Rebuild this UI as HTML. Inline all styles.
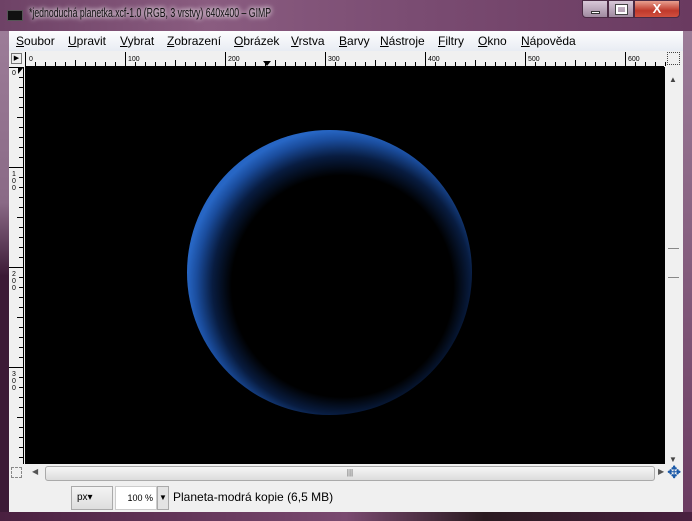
<!DOCTYPE html>
<html><head><meta charset="utf-8"><style>
*{margin:0;padding:0;box-sizing:border-box}
body{width:692px;height:521px;overflow:hidden;background:#5a2a50;font-family:"Liberation Sans","DejaVu Sans",sans-serif;position:relative}
.a{position:absolute}
</style></head><body>
<div class="a" style="left:0;top:0;width:692px;height:31px;background:linear-gradient(90deg,#6e4266 0%,#8a5c80 30%,#7a4c72 60%,#6a3a60 100%)"></div>
<div class="a" style="left:0;top:31px;width:9px;height:490px;background:linear-gradient(180deg,#9c7c98 0%,#8a6a86 35%,#3c1a36 50%,#3c1a36 100%)"></div>
<div class="a" style="left:683px;top:31px;width:9px;height:490px;background:linear-gradient(180deg,#9c7c98,#6a3a60)"></div>
<div class="a" style="left:0;top:512px;width:692px;height:9px;background:linear-gradient(90deg,#4a2040,#7a4a70 50%,#2a1a20 70%,#4a2040)"></div>
<div class="a" style="left:7px;top:10px;width:16px;height:11px;background:#111;border:1px solid #555"></div>
<div class="a" style="left:29px;top:5px;font-size:13px;color:#111;white-space:nowrap;transform:scaleX(0.67);transform-origin:0 0;text-shadow:0 0 8px #fff,0 0 6px #fff">*jednoduchá planetka.xcf-1.0 (RGB, 3 vrstvy) 640x400 – GIMP</div>
<div class="a" style="left:582px;top:0;width:26px;height:18px;border:1px solid #4a2a44;border-radius:0 0 0 4px;background:linear-gradient(#d8c8d8,#a08aa0)"><div class="a" style="left:8px;top:10px;width:9px;height:3px;background:#fff;border:1px solid #333"></div></div>
<div class="a" style="left:608px;top:0;width:26px;height:18px;border:1px solid #4a2a44;background:linear-gradient(#d8c8d8,#a08aa0)"><div class="a" style="left:7px;top:4px;width:11px;height:9px;border:2px solid #fff;outline:1px solid #444"></div></div>
<div class="a" style="left:634px;top:0;width:46px;height:18px;border:1px solid #4a2a44;border-radius:0 0 4px 0;background:linear-gradient(#e8a090,#c0392b 60%,#d05040);color:#fff;font-weight:bold;font-size:13px;text-align:center;line-height:16px">X</div>
<div class="a" style="left:9px;top:31px;width:674px;height:481px;background:#f0f0f0"></div>
<div class="a" style="left:9px;top:31px;width:674px;height:20px;background:linear-gradient(#fdfdfe,#e8ecf3);font-size:12px;color:#000;white-space:nowrap;line-height:20px">
<span class="a" style="left:7px"><u>S</u>oubor</span><span class="a" style="left:59px"><u>U</u>pravit</span><span class="a" style="left:111px"><u>V</u>ybrat</span><span class="a" style="left:158px"><u>Z</u>obrazení</span><span class="a" style="left:225px"><u>O</u>brázek</span><span class="a" style="left:282px"><u>V</u>rstva</span><span class="a" style="left:330px"><u>B</u>arvy</span><span class="a" style="left:371px"><u>N</u>ástroje</span><span class="a" style="left:429px"><u>F</u>iltry</span><span class="a" style="left:469px"><u>O</u>kno</span><span class="a" style="left:512px"><u>N</u>ápověda</span></div>
<div class="a" style="left:11px;top:53px;width:11px;height:11px;border:1px solid #777;background:#eee;font-size:7px;line-height:9px;text-align:center">▶</div>
<svg class="a" style="left:0;top:0" width="692" height="521">
<g stroke="#000" stroke-width="1" shape-rendering="crispEdges">
<line x1="25" y1="66.5" x2="664" y2="66.5"/>
<line x1="23.5" y1="67" x2="23.5" y2="464"/>
</g>
<g id="ht" stroke="#000" shape-rendering="crispEdges"></g>
<g font-size="7" font-family="Liberation Sans" fill="#000">
<text x="29" y="61">0</text><text x="128" y="61">100</text><text x="228" y="61">200</text><text x="328" y="61">300</text><text x="428" y="61">400</text><text x="528" y="61">500</text><text x="628" y="61">600</text>
<text x="12" y="75">0</text>
<text x="12" y="176">1</text><text x="12" y="183">0</text><text x="12" y="190">0</text>
<text x="12" y="276">2</text><text x="12" y="283">0</text><text x="12" y="290">0</text>
<text x="12" y="376">3</text><text x="12" y="383">0</text><text x="12" y="390">0</text>
</g>
<polygon points="263,61 271,61 267,66" fill="#000"/>
<polygon points="18,68 23,68 18,74" fill="#000"/>
</svg>
<div class="a" style="left:25px;top:67px;width:640px;height:397px;background:#000"></div>
<svg class="a" style="left:0;top:0" width="692" height="521">
<defs><radialGradient id="g" cx="0.54" cy="0.54" r="0.54" fx="0.56" fy="0.57">
<stop offset="0" stop-color="#000"/><stop offset="0.72" stop-color="#000"/><stop offset="0.84" stop-color="#081c40"/><stop offset="0.94" stop-color="#1a4c9c"/><stop offset="1" stop-color="#2766c4"/></radialGradient></defs>
<circle cx="329.5" cy="272.5" r="142.5" fill="url(#g)"/>
</svg>
<div class="a" style="left:666px;top:67px;width:17px;height:397px;background:#f0f0f0"></div>
<div class="a" style="left:669px;top:75px;font-size:8px;color:#444">▲</div>
<div class="a" style="left:668px;top:248px;width:11px;height:30px;border-top:1px solid #888;border-bottom:1px solid #888"></div>
<div class="a" style="left:669px;top:455px;font-size:8px;color:#444">▼</div>
<div class="a" style="left:667px;top:52px;width:13px;height:13px;border:1px dotted #444"></div>
<div class="a" style="left:11px;top:467px;width:11px;height:11px;border:1px dashed #888"></div>
<div class="a" style="left:32px;top:467px;font-size:8px;color:#555">◀</div>
<div class="a" style="left:45px;top:466px;width:610px;height:15px;border:1px solid #aaa;border-radius:3px;background:linear-gradient(#f6f6f6,#dcdcdc);text-align:center;font-size:8px;line-height:12px;color:#555">|||</div>
<div class="a" style="left:658px;top:467px;font-size:8px;color:#555">▶</div>
<div class="a" style="left:667px;top:464px;font-size:17px;color:#1c5aa8;line-height:17px">✥</div>
<div class="a" style="left:71px;top:486px;width:42px;height:24px;border:1px solid #aaa;background:linear-gradient(#f4f4f4,#dedede);font-size:10px;line-height:22px;padding-left:5px">px▾</div>
<div class="a" style="left:115px;top:486px;width:42px;height:24px;background:#fff;border:1px solid #ccc;font-size:9px;line-height:22px;text-align:right;padding-right:3px">100 %</div>
<div class="a" style="left:157px;top:486px;width:12px;height:24px;border:1px solid #aaa;background:#e4e4e4;font-size:8px;line-height:22px;text-align:center">▼</div>
<div class="a" style="left:173px;top:490px;font-size:12px;color:#000;white-space:nowrap">Planeta-modrá kopie (6,5 MB)</div>
<script>
var s='',h=document.getElementById('ht');
for(var x=0;x<=640;x+=10){var X=25.5+x;var L=x%100==0?14:(x%50==0?6:4);s+='<line x1="'+X+'" y1="'+(66-L)+'" x2="'+X+'" y2="66"/>';}
for(var y=0;y<=397;y+=10){var Y=67.5+y;var L=y%100==0?14:(y%50==0?6:4);s+='<line x1="'+(23-L)+'" y1="'+Y+'" x2="23" y2="'+Y+'"/>';}
h.innerHTML=s;
</script>
</body></html>
